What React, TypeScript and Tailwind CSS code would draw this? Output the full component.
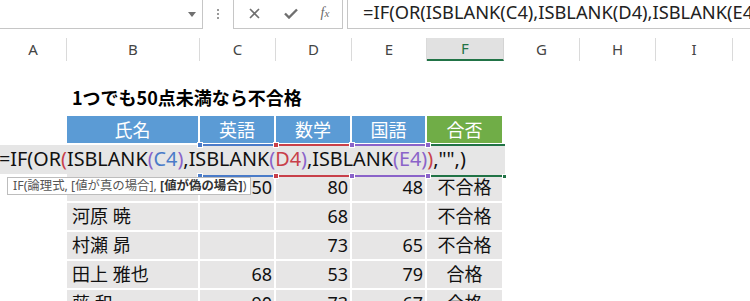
import React from "react";

const COLS = [67, 133, 76, 76, 75, 77, 76, 76, 77, 100];
const LETTERS = ["A", "B", "C", "D", "E", "F", "G", "H", "I", ""];

const RED = "#c8404a";
const PURPLE = "#8a63c9";
const BLUE = "#4a7bc8";

type RowData = { name: string; c: string; d: string; e: string; f: string };

const rows: RowData[] = [
  { name: "", c: "50", d: "80", e: "48", f: "不合格" },
  { name: "河原 暁", c: "", d: "68", e: "", f: "不合格" },
  { name: "村瀬 昴", c: "", d: "73", e: "65", f: "不合格" },
  { name: "田上 雅也", c: "68", d: "53", e: "79", f: "合格" },
  { name: "藤 和", c: "90", d: "73", e: "67", f: "合格" },
];

function DataRow({ r }: { r: RowData }) {
  return (
    <div className="flex h-[29px] text-[18px] text-[#111]">
      <div className="w-[67px] shrink-0" />
      <div className="w-[133px] shrink-0 bg-[#e7e6e6] border-r-2 border-b-2 border-white flex items-center pl-[5px] whitespace-pre">
        {r.name}
      </div>
      <div className="w-[76px] shrink-0 bg-[#e7e6e6] border-r-2 border-b-2 border-white flex items-center justify-end pr-[2px]">
        {r.c}
      </div>
      <div className="w-[76px] shrink-0 bg-[#e7e6e6] border-r-2 border-b-2 border-white flex items-center justify-end pr-[2px]">
        {r.d}
      </div>
      <div className="w-[75px] shrink-0 bg-[#e7e6e6] border-r-2 border-b-2 border-white flex items-center justify-end pr-[2px]">
        {r.e}
      </div>
      <div className="w-[77px] shrink-0 bg-[#e7e6e6] border-r-2 border-b-2 border-white flex items-center justify-center">
        {r.f}
      </div>
    </div>
  );
}

function Corner({ x, y, color }: { x: number; y: number; color: string }) {
  return (
    <div
      className="absolute w-[6px] h-[6px] border border-white"
      style={{ left: x - 3, top: y - 3, backgroundColor: color }}
    />
  );
}

export default function App() {
  return (
    <div className="relative w-[750px] h-[301px] overflow-hidden bg-white font-['Noto_Sans','Noto_Sans_CJK_JP',sans-serif]">
      {/* Formula bar */}
      <div className="flex h-[29px]">
        <div className="w-[203px] shrink-0 border-r border-b border-[#c6c6c6] flex items-center justify-end pr-[6px]">
          <svg width="8" height="5" viewBox="0 0 8 5">
            <path d="M0 0 L8 0 L4 5 Z" fill="#707070" />
          </svg>
        </div>
        <div className="w-[30px] shrink-0 flex flex-col items-center justify-center gap-[2px] pb-[2px]">
          <div className="w-[2px] h-[2px] bg-[#9a9a9a]" />
          <div className="w-[2px] h-[2px] bg-[#9a9a9a]" />
          <div className="w-[2px] h-[2px] bg-[#9a9a9a]" />
        </div>
        <div className="w-[110px] shrink-0 border-l border-r border-b border-[#c6c6c6] flex items-center pb-[2px]">
          <div className="w-[40px] flex justify-center">
            <svg width="11" height="11" viewBox="0 0 11 11">
              <path d="M1 1 L10 10 M10 1 L1 10" stroke="#6f6f6f" strokeWidth="1.6" />
            </svg>
          </div>
          <div className="w-[34px] flex justify-center">
            <svg width="14" height="11" viewBox="0 0 14 11">
              <path d="M1 5.5 L5 9.5 L13 1.5" stroke="#6f6f6f" strokeWidth="2.4" fill="none" />
            </svg>
          </div>
          <div className="w-[34px] flex justify-center">
            <span className="font-['Liberation_Serif',serif] italic text-[14px] text-[#6a6a6a] leading-none">
              f<span className="text-[11px]">x</span>
            </span>
          </div>
        </div>
        <div className="w-[4px] shrink-0" />
        <div className="flex-1 min-w-0 border-l border-b border-[#c6c6c6] pl-[15px] flex items-center pb-[3px] overflow-hidden">
          <span className="whitespace-nowrap text-[18.3px] text-[#222] leading-none">
            =IF(OR(ISBLANK(C4),ISBLANK(D4),ISBLANK(E4)),"",)
          </span>
        </div>
      </div>

      <div className="h-[9px]" />

      {/* Column headers */}
      <div className="flex h-[23px]">
        {COLS.map((w, i) => (
          <div
            key={i}
            className={
              i === 5
                ? "shrink-0 h-[23px] bg-[#e1e1e1] border-b-2 border-[#217346] border-r border-r-[#d4d4d4] flex items-center justify-center text-[15px] text-[#217346]"
                : "shrink-0 h-[23px] border-r border-[#dadada] flex items-center justify-center text-[15px] text-[#444]"
            }
            style={{ width: w }}
          >
            {LETTERS[i]}
          </div>
        ))}
      </div>

      {/* Row 1 empty */}
      <div className="h-[24px]" />

      {/* Title row */}
      <div className="flex h-[31px] items-center pb-[6px]">
        <div className="w-[72px] shrink-0" />
        <span className="font-['Noto_Sans_CJK_JP',sans-serif] font-bold text-[18px] text-black">
          1つでも50点未満なら不合格
        </span>
      </div>

      {/* Table header */}
      <div className="flex h-[29px] text-[18px] text-white font-['Noto_Sans_CJK_JP',sans-serif]">
        <div className="w-[67px] shrink-0" />
        <div className="w-[133px] shrink-0 bg-[#5b9bd5] border-r-2 border-b-2 border-white flex items-center justify-center">
          氏名
        </div>
        <div className="w-[76px] shrink-0 bg-[#5b9bd5] border-r-2 border-b-2 border-white flex items-center justify-center">
          英語
        </div>
        <div className="w-[76px] shrink-0 bg-[#5b9bd5] border-r-2 border-b-2 border-white flex items-center justify-center">
          数学
        </div>
        <div className="w-[75px] shrink-0 bg-[#5b9bd5] border-r-2 border-b-2 border-white flex items-center justify-center">
          国語
        </div>
        <div className="w-[77px] shrink-0 bg-[#70ad47] border-r-2 border-b-2 border-white flex items-center justify-center">
          合否
        </div>
      </div>

      {/* Row 4 (being edited) */}
      <div className="relative">
        <DataRow r={{ name: "", c: "", d: "", e: "", f: "" }} />
        <div className="absolute left-0 top-0 w-[505px] h-[29px] bg-[#e6e6e6] flex items-center overflow-hidden">
          <span className="whitespace-nowrap text-[19.8px] text-[#111] leading-none -ml-[1px] pb-[1px]">
            =IF(OR<span style={{ color: RED }}>(</span>ISBLANK
            <span style={{ color: PURPLE }}>(</span>
            <span style={{ color: BLUE }}>C4</span>
            <span style={{ color: PURPLE }}>)</span>,ISBLANK
            <span style={{ color: PURPLE }}>(</span>
            <span style={{ color: RED }}>D4</span>
            <span style={{ color: PURPLE }}>)</span>,ISBLANK
            <span style={{ color: PURPLE }}>(</span>
            <span style={{ color: PURPLE }}>E4</span>
            <span style={{ color: PURPLE }}>)</span>
            <span style={{ color: RED }}>)</span>,"",)
          </span>
        </div>
      </div>

      {rows.map((r, i) => (
        <DataRow key={i} r={r} />
      ))}

      {/* Range highlight borders */}
      <div className="absolute left-[200px] top-[144px] w-[76px] h-[2px] bg-[#4a7bc8]" />
      <div className="absolute left-[200px] top-[175px] w-[76px] h-[2px] bg-[#4a7bc8]" />
      <div className="absolute left-[276px] top-[144px] w-[76px] h-[2px] bg-[#c8404a]" />
      <div className="absolute left-[276px] top-[175px] w-[76px] h-[2px] bg-[#c8404a]" />
      <div className="absolute left-[352px] top-[144px] w-[76px] h-[2px] bg-[#8a63c9]" />
      <div className="absolute left-[352px] top-[175px] w-[76px] h-[2px] bg-[#8a63c9]" />
      <div className="absolute left-[428px] top-[144px] w-[77px] h-[2px] bg-[#217346]" />
      <div className="absolute left-[428px] top-[175px] w-[77px] h-[2px] bg-[#217346]" />
      <Corner x={200} y={145} color={BLUE} />
      <Corner x={200} y={176} color={BLUE} />
      <Corner x={276} y={145} color={RED} />
      <Corner x={276} y={176} color={RED} />
      <Corner x={352} y={145} color={PURPLE} />
      <Corner x={352} y={176} color={PURPLE} />
      <Corner x={428} y={145} color={PURPLE} />
      <Corner x={428} y={176} color={PURPLE} />
      <div className="absolute left-[502px] top-[174px] w-[5px] h-[5px] bg-[#217346] border border-white" />

      {/* Function tooltip */}
      <div className="absolute left-[7px] top-[177px] w-[244px] h-[18px] bg-white border border-[#bdbdbd] flex items-center pl-[5px] overflow-hidden">
        <span className="whitespace-nowrap text-[12.4px] text-[#555] leading-none font-['Noto_Sans','Noto_Sans_CJK_JP',sans-serif]">
          IF(論理式, [値が真の場合], <span className="font-bold text-[#333]">[値が偽の場合]</span>)
        </span>
      </div>
    </div>
  );
}
